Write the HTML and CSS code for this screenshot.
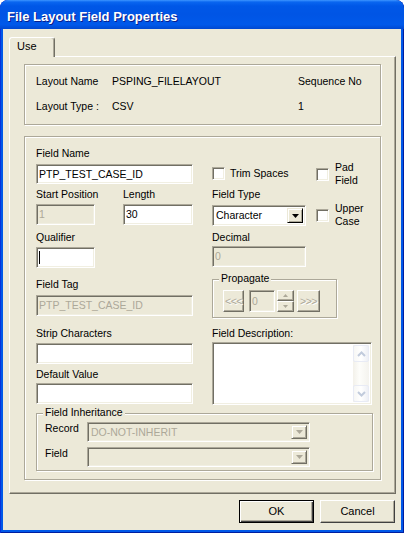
FILE: index.html
```html
<!DOCTYPE html>
<html>
<head>
<meta charset="utf-8">
<title>File Layout Field Properties</title>
<link rel="stylesheet" href="styles.css">
</head>
<body>
<div class="window">
  <div class="titlebar"><span class="title">File Layout Field Properties</span></div>
  <div class="client">
    <div class="tabstrip"><div class="tab">Use</div></div>
    <div class="panel">
      <div class="etched info">
        <span>Layout Name</span><span>PSPING_FILELAYOUT</span><span>Sequence No</span>
        <span>Layout Type :</span><span>CSV</span><span>1</span>
      </div>

      <div class="etched fields">
        <div class="cols">
          <div class="col-left">
            <div class="lbl">Field Name</div>
            <div class="edit fname">PTP_TEST_CASE_ID</div>

            <div class="pair">
              <div class="start">
                <div class="lbl">Start Position</div>
                <div class="edit disabled mt-3">1</div>
              </div>
              <div class="length">
                <div class="lbl">Length</div>
                <div class="edit mt-3">30</div>
              </div>
            </div>

            <div class="lbl mt-6">Qualifier</div>
            <div class="edit narrow mt-3"><span class="caret"></span></div>

            <div class="lbl mt-10">Field Tag</div>
            <div class="edit disabled mt-4">PTP_TEST_CASE_ID</div>

            <div class="lbl mt-11">Strip Characters</div>
            <div class="edit mt-3"></div>

            <div class="lbl mt-4">Default Value</div>
            <div class="edit mt-2"></div>
          </div>

          <div class="col-right">
            <div class="checks">
              <div class="checks-main">
                <label class="check-row trim"><span class="check"></span><span>Trim Spaces</span></label>
                <div class="lbl mt-8">Field Type</div>
                <div class="combo mt-4">
                  <span class="combo-text">Character</span>
                  <span class="drop"><svg width="7" height="4" viewBox="0 0 7 4"><polygon points="0,0 7,0 3.5,4" fill="#000"/></svg></span>
                </div>
                <div class="lbl mt-5">Decimal</div>
                <div class="edit disabled mt-2">0</div>
              </div>
              <div class="checks-side">
                <label class="check-row pad"><span class="check"></span><span>Pad<br>Field</span></label>
                <label class="check-row upper"><span class="check"></span><span>Upper<br>Case</span></label>
              </div>
            </div>

            <div class="etched propagate">
              <span class="legend">Propagate</span>
              <span class="pbtn prev">&lt;&lt;&lt;</span>
              <span class="edit disabled prop-num">0</span>
              <span class="spin">
                <span class="sbtn"><svg width="5" height="3" viewBox="0 0 5 3"><polygon points="2.5,0 5,3 0,3" fill="#ACA899"/></svg></span>
                <span class="sbtn"><svg width="5" height="3" viewBox="0 0 5 3"><polygon points="0,0 5,0 2.5,3" fill="#ACA899"/></svg></span>
              </span>
              <span class="pbtn next">&gt;&gt;&gt;</span>
            </div>

            <div class="lbl mt-9">Field Description:</div>
            <div class="memo mt-2">
              <div class="vscroll">
                <span class="sarrow"><svg width="9" height="6" viewBox="0 0 9 6"><polyline points="1,5 4.5,1.5 8,5" fill="none" stroke="#C1CBDC" stroke-width="2"/></svg></span>
                <span class="strack"></span>
                <span class="sarrow"><svg width="9" height="6" viewBox="0 0 9 6"><polyline points="1,1 4.5,4.5 8,1" fill="none" stroke="#C1CBDC" stroke-width="2"/></svg></span>
              </div>
            </div>
          </div>
        </div>

        <div class="etched inherit">
          <span class="legend">Field Inheritance</span>
          <div class="irow">
            <span class="ilbl">Record</span>
            <div class="combo wide off">
              <span class="combo-text">DO-NOT-INHERIT</span>
              <span class="drop"><svg width="7" height="4" viewBox="0 0 7 4"><polygon points="0,0 7,0 3.5,4" fill="#ACA899"/></svg></span>
            </div>
          </div>
          <div class="irow mt-5">
            <span class="ilbl">Field</span>
            <div class="combo wide off">
              <span class="combo-text"></span>
              <span class="drop"><svg width="7" height="4" viewBox="0 0 7 4"><polygon points="0,0 7,0 3.5,4" fill="#ACA899"/></svg></span>
            </div>
          </div>
        </div>
      </div>
    </div>

    <div class="buttons">
      <button class="btn default">OK</button>
      <button class="btn">Cancel</button>
    </div>
  </div>
</div>
</body>
</html>
```

FILE: styles.css
```css
* { box-sizing: border-box; }

html, body {
  margin: 0;
  padding: 0;
  background: #fff;
}

body {
  font-family: "Liberation Sans", Arial, sans-serif;
  font-size: 10.5px;
  line-height: 13px;
  color: #000;
}

/* window frame */
.window {
  width: 404px;
  height: 533px;
  display: flex;
  flex-direction: column;
  background: #0058E8;
  border-radius: 8px 8px 0 0;
  box-shadow: inset 1px 0 0 #0831D9, inset -1px 0 0 #001EA0, inset 0 -1px 0 #001EA0;
  overflow: hidden;
}

.titlebar {
  height: 29px;
  flex: none;
  display: flex;
  align-items: center;
  padding: 3px 0 0 7px;
  border-radius: 8px 8px 0 0;
  background: linear-gradient(#3D95FF 0, #0A66F0 2px, #0057E7 6px, #0055E5 50%, #0059EA 85%, #0048D0 100%);
}

.title {
  color: #fff;
  font-weight: bold;
  font-size: 13px;
  text-shadow: 1px 1px 0 #0A1E8C;
}

.client {
  flex: 1;
  margin: 0 3px 3px;
  padding: 8px 0 0 6px;
  background: #ECE9D8;
}

/* tab control */
.tabstrip {
  height: 19px;
  display: flex;
}

.tab {
  position: relative;
  z-index: 1;
  width: 46px;
  height: 20px;
  padding: 2px 0 0 7px;
  background: #ECE9D8;
  border: 1px solid;
  border-bottom: none;
  border-color: #fff #716F64 #ECE9D8 #fff;
  box-shadow: inset -1px 0 0 #ACA899;
  border-radius: 3px 3px 0 0;
  font-size: 11px;
}

.panel {
  width: 387px;
  height: 438px;
  padding: 7px 0 0 14px;
  border: 1px solid;
  border-color: #fff #716F64 #716F64 #fff;
  box-shadow: inset -1px -1px 0 #ACA899;
}

/* etched group boxes */
.etched {
  position: relative;
  border: 1px solid #ACA899;
  box-shadow: inset 1px 1px 0 #fff, 1px 1px 0 #fff;
}

.legend {
  position: absolute;
  top: -8px;
  left: 6px;
  padding: 0 2px;
  background: #ECE9D8;
  white-space: nowrap;
}

.info {
  width: 357px;
  height: 61px;
  display: grid;
  grid-template-columns: 76px 186px 1fr;
  row-gap: 12px;
  align-content: start;
  padding: 10px 0 0 11px;
  white-space: nowrap;
}

.fields {
  width: 357px;
  height: 344px;
  margin-top: 11px;
  padding: 10px 0 0 11px;
}

.cols {
  display: flex;
  gap: 19px;
  height: 258px;
}

.col-left {
  width: 157px;
  display: flex;
  flex-direction: column;
}

.col-right {
  width: 160px;
  display: flex;
  flex-direction: column;
}

.lbl {
  height: 13px;
  white-space: nowrap;
}

/* spacing helpers */
.mt-2 { margin-top: 2px; }
.mt-3 { margin-top: 3px; }
.mt-4 { margin-top: 4px; }
.mt-5 { margin-top: 5px; }
.mt-6 { margin-top: 6px; }
.mt-8 { margin-top: 8px; }
.mt-9 { margin-top: 9px; }
.mt-10 { margin-top: 10px; }
.mt-11 { margin-top: 11px; }

/* sunken edit box */
.edit {
  display: block;
  height: 21px;
  padding: 3px 0 0 2px;
  background: #fff;
  border: 1px solid;
  border-color: #ACA899 #fff #fff #ACA899;
  box-shadow: inset 1px 1px 0 #716F64, inset -1px -1px 0 #F1EFE2;
  white-space: nowrap;
  overflow: hidden;
}

.edit.disabled {
  background: #ECE9D8;
  color: #ACA899;
}

.fname {
  height: 20px;
  margin-top: 4px;
}

.caret {
  display: inline-block;
  width: 1px;
  height: 13px;
  background: #000;
  vertical-align: top;
}

.pair {
  display: flex;
  gap: 28px;
  margin-top: 4px;
}

.start { width: 59px; }
.length { width: 70px; }
.narrow { width: 59px; }

/* check boxes */
.check-row {
  display: flex;
  align-items: center;
  gap: 5px;
  white-space: nowrap;
}

.check {
  width: 13px;
  height: 13px;
  flex: none;
  background: #fff;
  border: 1px solid;
  border-color: #ACA899 #fff #fff #ACA899;
  box-shadow: inset 1px 1px 0 #716F64, inset -1px -1px 0 #F1EFE2;
}

.checks {
  display: flex;
  gap: 10px;
}

.checks-main {
  width: 94px;
  display: flex;
  flex-direction: column;
}

.checks-side {
  display: flex;
  flex-direction: column;
}

.trim {
  height: 13px;
  margin-top: 20px;
}

.pad { margin-top: 14px; gap: 6px; }
.upper { margin-top: 15px; gap: 6px; }

/* combo boxes */
.combo {
  height: 21px;
  display: flex;
  padding: 2px;
  background: #fff;
  border: 1px solid;
  border-color: #ACA899 #fff #fff #ACA899;
  box-shadow: inset 1px 1px 0 #716F64, inset -1px -1px 0 #F1EFE2;
}

.combo-text {
  flex: 1;
  padding: 1px 0 0 1px;
  white-space: nowrap;
}

.drop {
  width: 16px;
  flex: none;
  display: flex;
  align-items: center;
  justify-content: center;
  background: #ECE9D8;
  border: 1px solid;
  border-color: #ECE9D8 #000 #000 #ECE9D8;
  box-shadow: inset 1px 1px 0 #fff, inset -1px -1px 0 #ACA899;
}

.combo.off {
  background: #ECE9D8;
  color: #ACA899;
}

.combo.off .drop {
  border-color: #ECE9D8 #716F64 #716F64 #ECE9D8;
}

.wide {
  width: 223px;
  height: 20px;
}

/* propagate group */
.propagate {
  width: 125px;
  height: 39px;
  margin-top: 12px;
  padding: 10px 0 0 10px;
  display: flex;
  align-items: flex-start;
}

.pbtn {
  height: 22px;
  display: flex;
  align-items: center;
  justify-content: center;
  background: #ECE9D8;
  color: #ACA899;
  text-shadow: 1px 1px 0 #fff;
  border: 1px solid;
  border-color: #fff #716F64 #716F64 #fff;
  box-shadow: inset -1px -1px 0 #ACA899;
  letter-spacing: -0.5px;
}

.prev { width: 21px; }
.next { width: 23px; margin-left: 3px; }

.prop-num {
  width: 26px;
  height: 22px;
  margin-left: 5px;
  padding-top: 4px;
}

.spin {
  width: 17px;
  height: 22px;
  margin-left: 2px;
  display: flex;
  flex-direction: column;
}

.sbtn {
  height: 11px;
  display: flex;
  align-items: center;
  justify-content: center;
  background: #ECE9D8;
  border: 1px solid;
  border-color: #fff #716F64 #716F64 #fff;
  box-shadow: inset -1px -1px 0 #ACA899;
}

/* description memo with themed scroll bar */
.memo {
  height: 63px;
  display: flex;
  justify-content: flex-end;
  padding: 2px;
  background: #fff;
  border: 1px solid;
  border-color: #ACA899 #fff #fff #ACA899;
  box-shadow: inset 1px 1px 0 #716F64, inset -1px -1px 0 #F1EFE2;
}

.vscroll {
  width: 16px;
  display: flex;
  flex-direction: column;
  background: linear-gradient(to right, #F3F1EA, #FDFDFA 40%, #F4F3EE);
}

.sarrow {
  height: 17px;
  display: flex;
  align-items: center;
  justify-content: center;
  border: 1px solid #E8EBF5;
  border-radius: 2px;
  background: linear-gradient(to right, #F7F7F5, #FFFFFF 50%, #EEF0F5);
}

.strack { flex: 1; }

/* field inheritance group */
.inherit {
  width: 337px;
  height: 58px;
  margin-top: 8px;
  padding: 8px 0 0 8px;
}

.irow {
  display: flex;
  align-items: flex-start;
}

.ilbl {
  width: 42px;
  flex: none;
}

/* dialog buttons */
.buttons {
  display: flex;
  justify-content: flex-end;
  gap: 6px;
  margin-top: 6px;
  padding-right: 6px;
}

.btn {
  width: 75px;
  height: 23px;
  padding: 0;
  display: flex;
  align-items: center;
  justify-content: center;
  font: inherit;
  font-size: 11px;
  color: #000;
  background: #ECE9D8;
  border: 1px solid;
  border-color: #fff #404040 #404040 #fff;
  box-shadow: inset -1px -1px 0 #ACA899;
}

.btn.default {
  border: 1px solid #000;
  box-shadow: inset 1px 1px 0 #fff, inset -1px -1px 0 #404040, inset -2px -2px 0 #ACA899;
}
```
